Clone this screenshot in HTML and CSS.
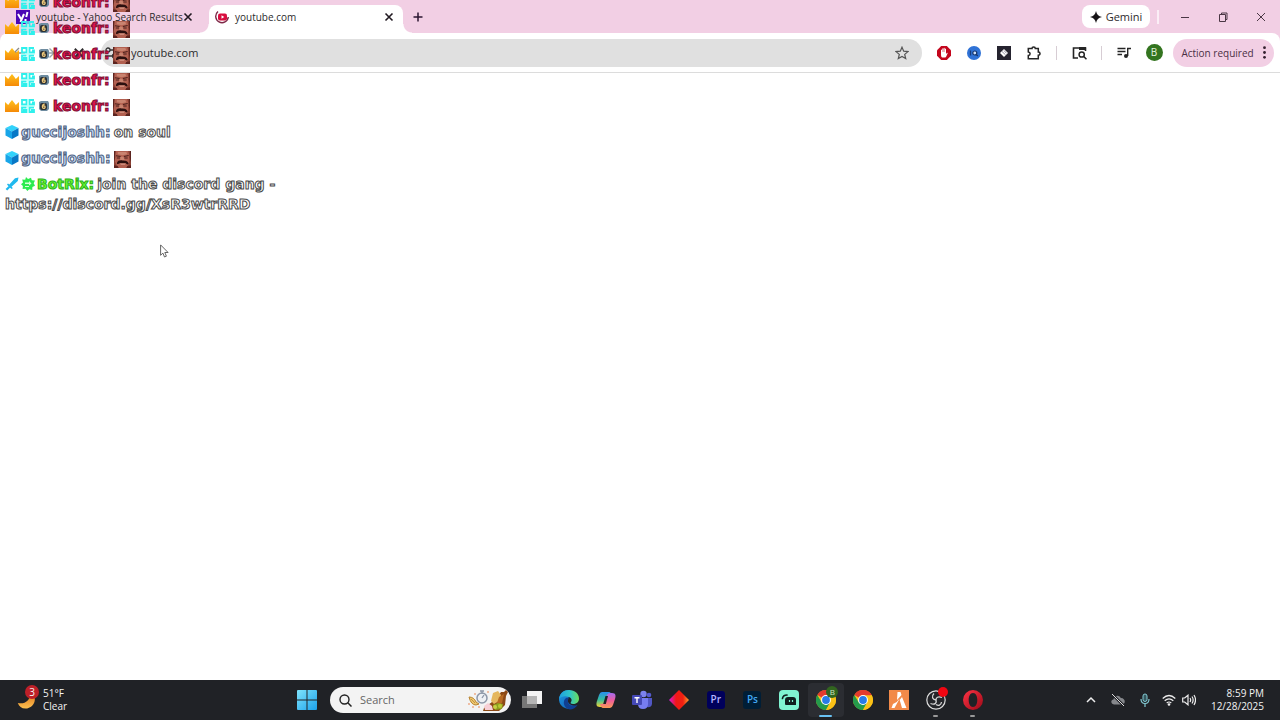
FILE: index.html
```
<!DOCTYPE html>
<html lang="en">
<head>
<meta charset="utf-8">
<title>youtube.com</title>
<link rel="stylesheet" href="styles.css">
</head>
<body>
<svg class="defs" aria-hidden="true">
  <defs>
    <linearGradient id="gold" x1="0" y1="0" x2="0" y2="1"><stop offset="0" stop-color="#ffc21c"/><stop offset="1" stop-color="#f58a07"/></linearGradient>
    <linearGradient id="moon" x1="0" y1="0" x2="0" y2="1"><stop offset="0" stop-color="#e07a1c"/><stop offset="1" stop-color="#fdc050"/></linearGradient>
    <linearGradient id="win" x1="0" y1="0" x2="1" y2="1"><stop offset="0" stop-color="#7fe3fb"/><stop offset="1" stop-color="#1ba2ec"/></linearGradient>
    <linearGradient id="edgeA" x1="0" y1="0" x2="1" y2="0"><stop offset="0" stop-color="#1e9fe0"/><stop offset=".55" stop-color="#2fc6c8"/><stop offset="1" stop-color="#6bdc5a"/></linearGradient>
    <linearGradient id="edgeB" x1="0" y1="0" x2="1" y2="1"><stop offset="0" stop-color="#1c9be4"/><stop offset="1" stop-color="#1458b0"/></linearGradient>
    <linearGradient id="copA" x1="0" y1="0" x2="0" y2="1"><stop offset="0" stop-color="#2a8df0"/><stop offset=".5" stop-color="#35bda0"/><stop offset="1" stop-color="#f3d430"/></linearGradient>
    <linearGradient id="copB" x1="0" y1="0" x2="0" y2="1"><stop offset="0" stop-color="#a66bf0"/><stop offset=".5" stop-color="#ee5d9a"/><stop offset="1" stop-color="#fb9a55"/></linearGradient>
    <linearGradient id="dia" x1="0" y1="0" x2="1" y2="0"><stop offset="0" stop-color="#d81be0"/><stop offset=".35" stop-color="#f01818"/><stop offset=".7" stop-color="#f02010"/><stop offset="1" stop-color="#ffa030"/></linearGradient>
    <linearGradient id="opera" x1="0" y1="0" x2="1" y2="1"><stop offset="0" stop-color="#ff3344"/><stop offset="1" stop-color="#9c0a18"/></linearGradient>
  </defs>
  <symbol id="crown" viewBox="0 0 14 14"><path fill="url(#gold)" d="M0 3l3.200 3L5 3.400 7 1l2 2.400L10.800 6 14 3v10H0z"/></symbol>
  <symbol id="og" viewBox="0 0 14 14"><path fill="none" stroke="#2ff0ec" stroke-width="1.800" d="M1 1h4.500v4.500H1zM13 1H8.500v4.500H13V3.500H11M5.500 8.500H1V13h4.500v-2H2M13 8.500H8.500V13H13v-2H10"/><path stroke="#a5fff8" stroke-width="1" d="M7 0v14M0 7h14"/></symbol>
  <symbol id="six" viewBox="0 0 10 10"><path fill="#6e8ca0" d="M0 1l2-1h7l1 2v6L8 10H2L0 8z"/><rect x="1" y="2" width="7" height="7" rx="2" fill="#2b3136"/><path fill="none" stroke="#f0c97a" stroke-width="1.300" d="M5.800 3.200C4 3 3.300 4.500 3.400 6c.1 2 2.800 1.800 2.700 0 0-1.200-1.600-1.400-2.600-.4"/></symbol>
  <symbol id="cube" viewBox="0 0 14 14"><path fill="#31d2fb" d="M7 0l6.500 3L7 6.500.5 3z"/><path fill="#18a5e8" d="M.5 3L7 6.500V14l-6.500-3.500z"/><path fill="#0878c6" d="M13.500 3L7 6.500V14l6.500-3.500z"/></symbol>
  <symbol id="sword" viewBox="0 0 14 14"><path fill="#20b9ee" d="M13.500.5L12.800 4 6.500 9.700 7.800 11l-1 1L5 10.700 2.200 13.500.6 12 3.500 9.200 2 7.500l1-1L4.300 7.600 10 1.200z"/></symbol>
  <symbol id="gear" viewBox="0 0 14 14"><path fill="#2cec4f" d="M5 0l2 2 3-1.200.8 2.500 3.200.2-1.300 2.800L14 8.800l-2.600 1.300-.2 3-3-.9L6.300 14l-1.700-2.300-3 .2.300-3L0 7.200l2-1.800L1.200 2.500l3 .2z"/><path fill="#d6ffd8" d="M4 5.500h4V4l2.500 2.400L8 8.500V7H4zM4 9h4v1H4z"/></symbol>
  <symbol id="face" viewBox="0 0 18 18"><path fill="#8a4034" d="M0 0h18v18H0z"/><path fill="#b26050" d="M2 0h13l1.500 5-.5 7-2 6H4L1 11V4z"/><path fill="#c98470" d="M4 1h9l1 2.500-5 1-5-1zM6.500 6h3.500l1.500 4h-5z"/><path stroke="#4a211c" stroke-width="1.200" d="M2 5l5 .8M10.500 5.800l5-1"/><path fill="#4a211c" d="M3 7h3.500v1H3zM11 7h3.500v1H11z"/><path fill="#2c100f" d="M3 13c1-3 3-3.300 6-3 3-.3 6 .5 6.500 3.500-1 1.500-2 .3-3-.5H6c-1 .8-2.500 1.500-3 0z"/><path fill="#d99a88" d="M6 13.200h6.500L11.500 14.500h-4z"/><path fill="#5c241f" d="M0 0h1.300v7L0 11zM17 0h1v12l-1.500-5zM0 15l4 1 1 2H0zM18 15l-4 1-1 2h5z"/></symbol>
  <symbol id="x" viewBox="0 0 10 10"><path fill="none" stroke="currentColor" stroke-width="1.600" d="M1.500 1.500l7 7m0-7l-7 7"/></symbol>
  <symbol id="chrome" viewBox="0 0 20 20"><circle cx="10" cy="10" r="10" fill="#fbc116"/><path fill="#e33b2e" d="M10 10L1.300 5A10 10 0 0 1 18.700 5z"/><path fill="#249a4b" d="M1.300 5A10 10 0 0 0 10 20l4.200-7.600L10 10 5.800 12.400z"/><path fill="#fbc116" d="M10 5.200h8.800A10 10 0 0 1 10 20l4.200-7.500z"/><circle cx="10" cy="10" r="4.900" fill="#fff"/><circle cx="10" cy="10" r="3.900" fill="#287be8"/></symbol>
</svg>

<header class="browser">
  <div class="tabs">
    <div class="tab">
      <svg class="fav" viewBox="0 0 14 14"><path fill="#4b08b5" d="M0 0h14v14H0z"/><path fill="none" stroke="#fff" stroke-width="2" d="M2 4l3 5M8 4L4.500 12M11.500 2l-1.300 5M9.500 9v2"/></svg>
      <span class="title">youtube - Yahoo Search Results</span>
      <button class="tab-x" aria-label="Close tab"><svg width="10" height="10"><use href="#x"/></svg></button>
    </div>
    <div class="tab active">
      <svg class="fav" viewBox="0 0 14 14"><rect x="3" y="3.500" width="9" height="7" rx="2" fill="#d90d3f"/><path fill="#fff" d="M6.500 5.200L9.300 7 6.500 8.800z"/><path fill="none" stroke="#7d2746" stroke-width="1.400" d="M3 1.500A6.300 6.300 0 1 0 13.300 7"/></svg>
      <span class="title">youtube.com</span>
      <button class="tab-x" aria-label="Close tab"><svg width="10" height="10"><use href="#x"/></svg></button>
    </div>
    <button class="new-tab" aria-label="New tab"><svg width="10" height="10" viewBox="0 0 10 10"><path stroke="#2b1630" stroke-width="1.500" d="M5 .5v9M.5 5h9"/></svg></button>
    <button class="gemini"><svg width="12" height="12" viewBox="0 0 12 12"><path fill="#161316" d="M6 0c.7 3.600 2.400 5.300 6 6-3.600.7-5.300 2.400-6 6-.7-3.600-2.400-5.300-6-6 3.600-.7 5.300-2.400 6-6z"/></svg>Gemini</button>
    <span class="strip-line"></span>
    <div class="window-controls">
      <button aria-label="Minimize"><svg width="10" height="10" viewBox="0 0 10 10"><path stroke="#4a3744" d="M1 5.500h8"/></svg></button>
      <button aria-label="Restore"><svg width="10" height="10" viewBox="0 0 10 10"><path fill="none" stroke="#4a3744" d="M1.500 2.500h6v7h-6zM3.500 2V1h5.500v6.500H8"/></svg></button>
      <button aria-label="Close"><svg width="10" height="10" viewBox="0 0 10 10"><path fill="none" stroke="#4a3744" d="M1 1l8 8m0-8L1 9"/></svg></button>
    </div>
  </div>

  <div class="toolbar">
    <div class="nav">
      <button aria-label="Back"><svg width="14" height="14" viewBox="0 0 14 14"><path fill="none" stroke="#8a8a8a" stroke-width="1.400" d="M13 7H2m5-5L2 7l5 5"/></svg></button>
      <button aria-label="Forward"><svg width="14" height="14" viewBox="0 0 14 14"><path fill="none" stroke="#9aa3aa" stroke-width="1.400" d="M1 7h11M7.500 2.500L12 7l-4.500 4.500"/></svg></button>
      <button aria-label="Stop"><svg width="12" height="12"><use href="#x"/></svg></button>
    </div>
    <div class="address">
      <svg width="14" height="14" viewBox="0 0 14 14"><path fill="none" stroke="#333" stroke-width="1.300" d="M6 4h7M1 10h7"/><circle cx="4" cy="4" r="2" fill="none" stroke="#333" stroke-width="1.300"/><circle cx="10.500" cy="10" r="2" fill="none" stroke="#333" stroke-width="1.300"/></svg>
      <input type="text" value="youtube.com" aria-label="Address">
      <button aria-label="Bookmark"><svg width="14" height="14" viewBox="0 0 14 14"><path fill="none" stroke="#555" stroke-width="1.200" d="M7 1.200l1.700 4 4.300.4-3.300 2.800 1 4.200L7 10.400l-3.700 2.200 1-4.200L1 5.600l4.300-.4z"/></svg></button>
    </div>
    <div class="extensions">
      <button aria-label="AdBlock"><svg width="14" height="14" viewBox="0 0 14 14"><path fill="#c4061d" d="M4.200 0h5.600L14 4.200v5.600L9.800 14H4.200L0 9.800V4.200z"/><path fill="#fff" d="M4 7V4.200c0-.8 1-.8 1 0V6h.3V3c0-.9 1-.9 1 0v3h.3V2.500c0-.9 1.100-.9 1.100 0V6H8V3.200c0-.9 1-.9 1 0V8l.6-.8c.6-.7 1.300-.2 1 .4L9 11c-.5.800-4 .8-4.500 0C4 10 4 8.500 4 7z"/></svg></button>
      <button aria-label="IQ extension"><svg width="14" height="14" viewBox="0 0 14 14"><circle cx="7" cy="7" r="7" fill="#2f72d6"/><path fill="none" stroke="#163a7a" stroke-width="1.300" d="M3.500 4.500v5"/><circle cx="7.800" cy="7" r="2" fill="#cfe0fb" stroke="#17366c" stroke-width="1.200"/><path stroke="#17366c" stroke-width="1.200" d="M9 8.300l1.800 1.700"/></svg></button>
      <button aria-label="Diamond extension"><svg width="14" height="14" viewBox="0 0 14 14"><path fill="#25232f" d="M0 0h14v14H0z"/><path fill="#fff" d="M7 3l4 4-4 4-4-4z"/><path stroke="#77758a" stroke-width=".8" d="M5 5.500l3.500 3.300M7 4.500l2.500 2.800"/></svg></button>
      <button aria-label="Extensions"><svg width="14" height="14" viewBox="0 0 14 14"><path fill="none" stroke="#242424" stroke-width="1.500" d="M1.300 2.500H5C5 .4 8.300.4 8.300 2.500h3v3.400c2.300 0 2.300 3.300 0 3.300v3.500h-10V9.400c2.400-.3 2.400-3.200 0-3.500z"/></svg></button>
      <span class="line"></span>
      <button aria-label="Search side panel"><svg width="15" height="14" viewBox="0 0 15 14"><path fill="none" stroke="#242424" stroke-width="1.600" d="M6 12H1.500V2h12v3"/><path fill="#242424" d="M7 1h7v3H7z"/><circle cx="9.700" cy="8.500" r="2.600" fill="none" stroke="#242424" stroke-width="1.500"/><path stroke="#242424" stroke-width="1.600" d="M11.500 10.300l3 3"/></svg></button>
      <span class="line"></span>
      <button aria-label="Media controls"><svg width="14" height="12" viewBox="0 0 14 12"><path stroke="#242424" stroke-width="1.400" fill="none" d="M.5 1.500h8M.5 4.500h8M.5 7.500h4.500M10.700 9V1.500H14"/><circle cx="9" cy="9" r="2" fill="#242424"/></svg></button>
      <button aria-label="Profile B"><span class="avatar">B</span></button>
    </div>
    <button class="action">Action required<svg width="3" height="13" viewBox="0 0 3 13"><g fill="#33202e"><circle cx="1.500" cy="1.700" r="1.400"/><circle cx="1.500" cy="6.500" r="1.400"/><circle cx="1.500" cy="11.300" r="1.400"/></g></svg></button>
  </div>
</header>

<main class="page"></main>

<section class="chat" aria-label="Chat">
  <p><svg><use href="#crown"/></svg><svg><use href="#og"/></svg><svg class="small"><use href="#six"/></svg><b class="keon">keonfr:</b><svg class="emote"><use href="#face"/></svg></p>
  <p><svg><use href="#crown"/></svg><svg><use href="#og"/></svg><svg class="small"><use href="#six"/></svg><b class="keon">keonfr:</b><svg class="emote"><use href="#face"/></svg></p>
  <p><svg><use href="#crown"/></svg><svg><use href="#og"/></svg><svg class="small"><use href="#six"/></svg><b class="keon">keonfr:</b><svg class="emote"><use href="#face"/></svg></p>
  <p><svg><use href="#crown"/></svg><svg><use href="#og"/></svg><svg class="small"><use href="#six"/></svg><b class="keon">keonfr:</b><svg class="emote"><use href="#face"/></svg></p>
  <p><svg><use href="#crown"/></svg><svg><use href="#og"/></svg><svg class="small"><use href="#six"/></svg><b class="keon">keonfr:</b><svg class="emote"><use href="#face"/></svg></p>
  <p><svg><use href="#cube"/></svg><b class="gucci">guccijoshh:</b>on soul</p>
  <p><svg><use href="#cube"/></svg><b class="gucci">guccijoshh:</b><svg class="emote"><use href="#face"/></svg></p>
  <p><svg><use href="#sword"/></svg><svg><use href="#gear"/></svg><b class="bot">BotRix:</b>join the discord gang - https://discord.gg/XsR3wtrRRD</p>
</section>

<svg class="cursor" width="9" height="14" viewBox="0 0 9 14"><path fill="#fff" stroke="#555" stroke-width=".9" d="M.6.900v10.400l2.300-2.200L4.500 13l1.900-.8-1.600-3.700h3.300z"/></svg>

<footer class="taskbar">
  <button class="weather">
    <span class="moon"><svg width="20" height="20" viewBox="0 0 20 20"><path fill="url(#moon)" d="M16 4c5 7-1 14.500-7.500 14.500C4.500 18.500 2 16.500.8 13 8 14.500 13 10.500 13 4z"/></svg><span class="count">3</span></span>
    <span class="stack"><span>51°F</span><span>Clear</span></span>
  </button>
  <div class="center">
    <button class="start" aria-label="Start"><svg width="20" height="20" viewBox="0 0 20 20"><path fill="url(#win)" d="M0 1q0-1 1-1h8.500v9.500H0zM10.500 0H19q1 0 1 1v8.500h-9.500zM0 10.500h9.500V20H1q-1 0-1-1zM10.500 10.500H20V19q0 1-1 1h-8.500z"/></svg></button>
    <label class="search">
      <svg width="13" height="13" viewBox="0 0 13 13"><circle cx="5.500" cy="5.500" r="4.500" fill="none" stroke="#222" stroke-width="1.400"/><path stroke="#222" stroke-width="1.500" d="M8.800 8.800l3.700 3.700"/></svg>
      <input type="text" placeholder="Search" aria-label="Search">
      <svg width="42" height="22" viewBox="0 0 42 22"><path fill="#8d4a16" d="M17 19l12-9 5-7 3 0 2-2 2 2-2 4-1 9-6 6H16z"/><path fill="#e5b75e" d="M26 4l5-2 3 4-2 6-5 3-3-3z"/><path fill="#b96b22" d="M32 8l5-3-2 9-6 3z"/><circle cx="15" cy="9" r="5" fill="#eef0f4" stroke="#8d97a8" stroke-width="1.500"/><path fill="none" stroke="#8d97a8" stroke-width="1.300" d="M15 2v3M13 2h4M15 9l2-3"/><path fill="#f7cfd6" d="M17 17l4-3 4 3 1 4h-8z"/><path fill="#8ea01f" d="M26 16l5-2 5 1-1 5-7 1z"/><circle cx="28" cy="18" r="2" fill="#c6cf45"/><circle cx="33" cy="17" r="2" fill="#bac933"/><path fill="#edc66e" stroke="#b88432" d="M2 8q5 0 7 5l3 2-3 1q-5 0-7-8z"/><path stroke="#c59440" d="M4 10l4 4"/><g fill="#eeab88"><circle cx="8" cy="5" r="1"/><circle cx="2" cy="15" r="1"/><circle cx="6" cy="18" r="1"/><circle cx="12" cy="18" r="1"/><circle cx="21" cy="3" r="1"/></g></svg>
    </label>
    <div class="apps">
      <button aria-label="Task view"><svg width="20" height="20" viewBox="0 0 20 20"><path fill="#f4f4f4" d="M5 1h15v13H5z"/><path fill="#777" d="M0 6h15v12H0z"/><path fill="#b5b5b5" d="M5 6h10v8H5z"/></svg></button>
      <button aria-label="Edge"><svg width="20" height="20" viewBox="0 0 20 20"><path fill="url(#edgeB)" d="M0 10C0 4 4 0 10 0c5 3 1 6-1 8-2 3 1 8 8 8A10 10 0 0 1 0 10z"/><path fill="#103f91" d="M6 9c-3 4 0 10 5 10.500 3 0 6-2 7.500-4.500-4 1.500-8.500 1-9.500-3-.5-2 .5-3 1-4-2-.5-3 0-4 1z"/><path fill="url(#edgeA)" d="M0 9C1 3 5 0 10 0c6 0 10 4 10 8.500 0 4-3 5.500-6 5.500-2 0-3-1-2-2 1-1.500 1-4-2-5C6 5.500 2 6.500 0 9z"/></svg></button>
      <button aria-label="Copilot"><svg width="20" height="20" viewBox="0 0 20 20"><path fill="url(#copA)" d="M6 2h7q2 0 3 4h-2q-2 0-3 3l-2 6q-1 2-3 2H4c-4 0-4-3-3-6l2-6q1-3 3-3z"/><path fill="url(#copB)" d="M14 18H7q-2 0-3-4h2q2 0 3-3l2-6q1-2 3-2h2c4 0 4 3 3 6l-2 6q-1 3-3 3z"/><path fill="#202227" d="M9.500 6h2.500l-2.200 8H7.200z"/></svg></button>
      <button aria-label="Teams"><svg width="20" height="20" viewBox="0 0 20 20"><circle cx="11.500" cy="4" r="3.200" fill="#7c82ee"/><circle cx="17" cy="5" r="2.300" fill="#555bd0"/><path fill="#5157c4" d="M13 8h7v6q-1 4-5 3z"/><path fill="#777df0" d="M6 8h10v6q0 5-5 5t-5-5z"/><rect y="5" width="10" height="10" rx="1" fill="#4448b5"/><path stroke="#fff" stroke-width="1.400" d="M2.500 7.700h5M5 7.500v5.500"/></svg></button>
      <button aria-label="Diamond"><svg width="20" height="20" viewBox="0 0 20 20"><path fill="url(#dia)" d="M10 0l10 10-10 10L0 10z"/></svg></button>
      <button aria-label="Premiere Pro"><span class="adobe premiere">Pr</span></button>
      <button aria-label="Photoshop"><span class="adobe photoshop">Ps</span></button>
      <button aria-label="Streamlabs"><svg width="20" height="20" viewBox="0 0 20 20"><rect width="20" height="20" rx="4" fill="#80f5d2"/><path fill="none" stroke="#10201f" stroke-width="1.700" stroke-linecap="round" d="M3.500 8.500Q4 5 8 5"/><path fill="#10201f" d="M9 7h5q3 0 3 3v5H7q-1 0-1-1v-4q0-3 3-3z"/><path stroke="#80f5d2" stroke-width="1.200" d="M10.500 10v2M13.500 10v2"/></svg></button>
      <button class="current" aria-label="Chrome profile B"><svg width="20" height="20"><use href="#chrome"/></svg><span class="badge profile">B</span></button>
      <button aria-label="Chrome"><svg width="20" height="20"><use href="#chrome"/></svg></button>
      <button aria-label="FiveM"><svg width="20" height="20" viewBox="0 0 20 20"><path fill="#f28a49" d="M0 0h20v20H0z"/><path fill="#fff" d="M8.500 2h3l1 3-4.500 5zM7.700 12l3-3.500L5.500 18H2.500L4 14zM13 7l4.500 11H13L10.700 10z"/></svg></button>
      <button class="running" aria-label="OBS"><svg width="20" height="20" viewBox="0 0 20 20"><circle cx="10" cy="10" r="9.200" fill="#25262a" stroke="#ddd" stroke-width="1.200"/><path fill="none" stroke="#d6d6d6" stroke-width="1.300" d="M8 3.500c-3 3-1.500 6 2 6.500M16 7.500c-4-1.500-6 0-6 2.500M4.500 13.500c4 1.500 6.500 0 5.500-3.500M15.500 12c-.5 3.500-3 4-5.500 2.500"/></svg><span class="badge record"></span></button>
      <button class="running" aria-label="Opera"><svg width="20" height="20" viewBox="0 0 20 20"><path fill="url(#opera)" fill-rule="evenodd" d="M10 0a10 10 0 1 0 0 20 10 10 0 0 0 0-20zm0 3c3 0 4.300 3.500 4.300 7S13 17 10 17s-4.300-3.500-4.300-7S7 3 10 3z"/></svg></button>
    </div>
  </div>
  <div class="tray">
    <button aria-label="Hidden icons"><svg width="10" height="8" viewBox="0 0 10 8"><path fill="none" stroke="#eee" stroke-width="1.500" d="M1 6l4-4 4 4"/></svg></button>
    <button aria-label="Cloud offline"><svg width="14" height="12" viewBox="0 0 14 12"><path fill="#85878b" d="M3 10.500C-.5 10-.5 6 2.500 5.500 3 1.500 8 .5 9.800 4c4.200-.3 5.500 5.500 1.700 6.500z"/><path stroke="#202126" stroke-width="2.500" d="M1 0l12 12"/><path stroke="#ddd" d="M1 0l12 12"/></svg></button>
    <button aria-label="Microphone"><svg width="10" height="14" viewBox="0 0 10 14"><rect x="3" y="1" width="4" height="7.500" rx="2" fill="#35585f" stroke="#83c9d2"/><path fill="none" stroke="#83c9d2" stroke-width="1.200" d="M1 6c0 6 8 6 8 0M5 10.500V14"/></svg></button>
    <button class="network" aria-label="Network and volume"><svg width="14" height="12" viewBox="0 0 14 12"><path fill="none" stroke="#eee" stroke-width="1.200" d="M.7 4.500q6.300-6 12.600 0M2.700 6.800q4.300-4 8.600 0M4.700 9q2.300-2 4.600 0"/><circle cx="7" cy="10.500" r="1.300" fill="#eee"/></svg><svg width="14" height="12" viewBox="0 0 14 12"><path fill="none" stroke="#eee" stroke-width="1.200" d="M.7 4h2L6 1.200v9.600L2.700 8h-2zM8 4q1.300 2 0 4M10 2.500q2.300 3.500 0 7M12 1q3 5 0 10"/></svg></button>
    <time class="stack clock"><span>8:59 PM</span><span>12/28/2025</span></time>
  </div>
</footer>
</body>
</html>
```
FILE: styles.css
```
* { box-sizing: border-box; }
body {
  margin: 0;
  min-height: 100vh;
  display: flex;
  flex-direction: column;
  position: relative;
  overflow-x: hidden;
  background: #fff;
  color: #2d2b2d;
  font: 10px/16px "Open Sans", "Noto Sans", sans-serif;
}
button {
  display: flex;
  align-items: center;
  justify-content: center;
  padding: 0;
  border: 0;
  background: none;
  color: inherit;
  font: inherit;
}
input {
  min-width: 0;
  flex: 1;
  padding: 0;
  border: 0;
  outline: 0;
  background: none;
  color: inherit;
  font: inherit;
}
svg { flex: none; }
.defs { position: absolute; width: 0; height: 0; }

.browser { background: #f2cfe4; }
.tabs { display: flex; height: 33px; padding: 5px 0 0 8px; }
.tab {
  display: flex;
  align-items: center;
  width: 194px;
  height: 24px;
  padding: 0 8px;
  gap: 6px;
}
.tab + .tab { margin-left: 7px; }
.fav { width: 14px; height: 14px; }
.tab .title { flex: 1; min-width: 0; white-space: nowrap; }
.tab-x { width: 12px; height: 16px; color: #221a22; }
.tab.active {
  position: relative;
  height: 28px;
  padding-bottom: 4px;
  padding-left: 6px;
  border-radius: 8px 8px 0 0;
  background: #fff;
}
.tab.active::before,
.tab.active::after {
  content: "";
  position: absolute;
  bottom: 0;
  width: 9px;
  height: 9px;
}
.tab.active::before { right: 100%; background: radial-gradient(circle at 0 0, transparent 8px, #fff 9px); }
.tab.active::after { left: 100%; background: radial-gradient(circle at 100% 0, transparent 8px, #fff 9px); }
.new-tab { width: 20px; height: 24px; margin-left: 5px; }
.gemini {
  width: 68px;
  height: 23px;
  margin-left: auto;
  gap: 4px;
  border-radius: 8px;
  background: #fff;
  font-size: 11px;
}
.strip-line { width: 2px; height: 14px; margin: 5px 7px; background: #fbeef6; }
.window-controls { display: flex; height: 23px; }
.window-controls button { width: 38px; }

.toolbar {
  display: flex;
  align-items: center;
  height: 40px;
  padding: 0 6px 0 4px;
  border-bottom: 1px solid #dcdcdc;
  border-radius: 8px 8px 0 0;
  background: #fff;
}
.nav { display: flex; width: 97px; }
.nav button { width: 30px; height: 28px; }
.address {
  display: flex;
  align-items: center;
  flex: 1;
  height: 28px;
  padding: 0 13px 0 3px;
  gap: 13px;
  border-radius: 14px;
  background: #e0e0e0;
  font-size: 11px;
}
.extensions { display: flex; align-items: center; margin: 0 4px 0 7px; }
.extensions button { width: 30px; height: 28px; }
.line { width: 1px; height: 14px; margin: 0 7px; background: #d7cdd4; }
.avatar {
  width: 17px;
  height: 17px;
  border-radius: 50%;
  background: #33741f;
  color: #e6f2df;
  line-height: 17px;
}
.action {
  width: 101px;
  height: 28px;
  gap: 9px;
  border-radius: 14px;
  background: #f2cfe4;
  color: #4b3044;
  white-space: nowrap;
}
.page { flex: 1; }

.chat {
  position: absolute;
  top: -11px;
  left: 5px;
  width: 280px;
  color: #fff;
  font: bold 14px/20px "DejaVu Sans", sans-serif;
  -webkit-text-stroke: 1px #4a4a4a;
}
.chat p { margin: 0; padding: 3px 0; }
.chat b { margin-right: 3px; }
.chat svg { width: 14px; height: 14px; margin-right: 2px; vertical-align: -2px; }
.chat .small { width: 10px; height: 10px; margin: 0 4px 0 2px; vertical-align: 0; }
.chat .emote { width: 17px; height: 17px; margin: 0; vertical-align: -5px; }
.chat .keon { color: #f01050; -webkit-text-stroke-color: #7d1034; }
.chat .gucci { color: #c3dafa; -webkit-text-stroke-color: #50627f; }
.chat .bot { color: #66ff30; -webkit-text-stroke-color: #2fae1c; }
.cursor { position: absolute; left: 160px; top: 244px; }

.taskbar {
  display: grid;
  grid-template-columns: 1fr auto 1fr;
  align-items: center;
  height: 40px;
  background: #202226;
  color: #f4f4f4;
}
.stack { display: flex; flex-direction: column; line-height: 13px; text-align: left; }
.weather { justify-self: start; margin-left: 17px; gap: 6px; }
.moon { position: relative; display: flex; }
.count {
  position: absolute;
  top: -5px;
  right: -2px;
  width: 14px;
  height: 14px;
  border-radius: 50%;
  background: #bd2028;
  line-height: 14px;
}
.center { display: flex; align-items: center; }
.start { width: 36px; height: 36px; }
.search {
  display: flex;
  align-items: center;
  width: 181px;
  height: 26px;
  margin: 0 3px 0 5px;
  padding: 0 2px 0 9px;
  gap: 8px;
  border-radius: 13px;
  background: #f3f3f3;
  color: #5d5d5d;
  font-size: 11px;
}
.search input::placeholder { color: #666; opacity: 1; }
.apps { display: grid; grid-template-columns: repeat(13, 1fr); width: 477px; }
.apps button { position: relative; height: 34px; border-radius: 4px; }
.apps .current { background: #2b2d32; }
.current::after,
.running::after {
  content: "";
  position: absolute;
  bottom: 0;
  width: 5px;
  height: 2px;
  border-radius: 1px;
  background: #999;
}
.current::after { width: 13px; background: #69c2f3; }
.adobe {
  width: 18px;
  height: 18px;
  border-radius: 3px;
  font-weight: 600;
  line-height: 17px;
}
.premiere { background: #00005b; color: #b5b5ff; }
.photoshop { background: #001e36; color: #43a9f5; }
.badge { position: absolute; border-radius: 50%; }
.profile {
  top: 3px;
  right: 6px;
  width: 12px;
  height: 12px;
  background: #32651f;
  color: #cfe3c5;
  font-size: 8px;
  line-height: 12px;
}
.record { top: 4px; right: 6px; width: 10px; height: 10px; background: #f00712; }
.tray { display: flex; align-items: center; justify-self: end; margin-right: 16px; }
.tray button { width: 27px; height: 34px; }
.tray .network { width: 40px; gap: 6px; }
.clock { margin-left: 12px; text-align: right; }
```
